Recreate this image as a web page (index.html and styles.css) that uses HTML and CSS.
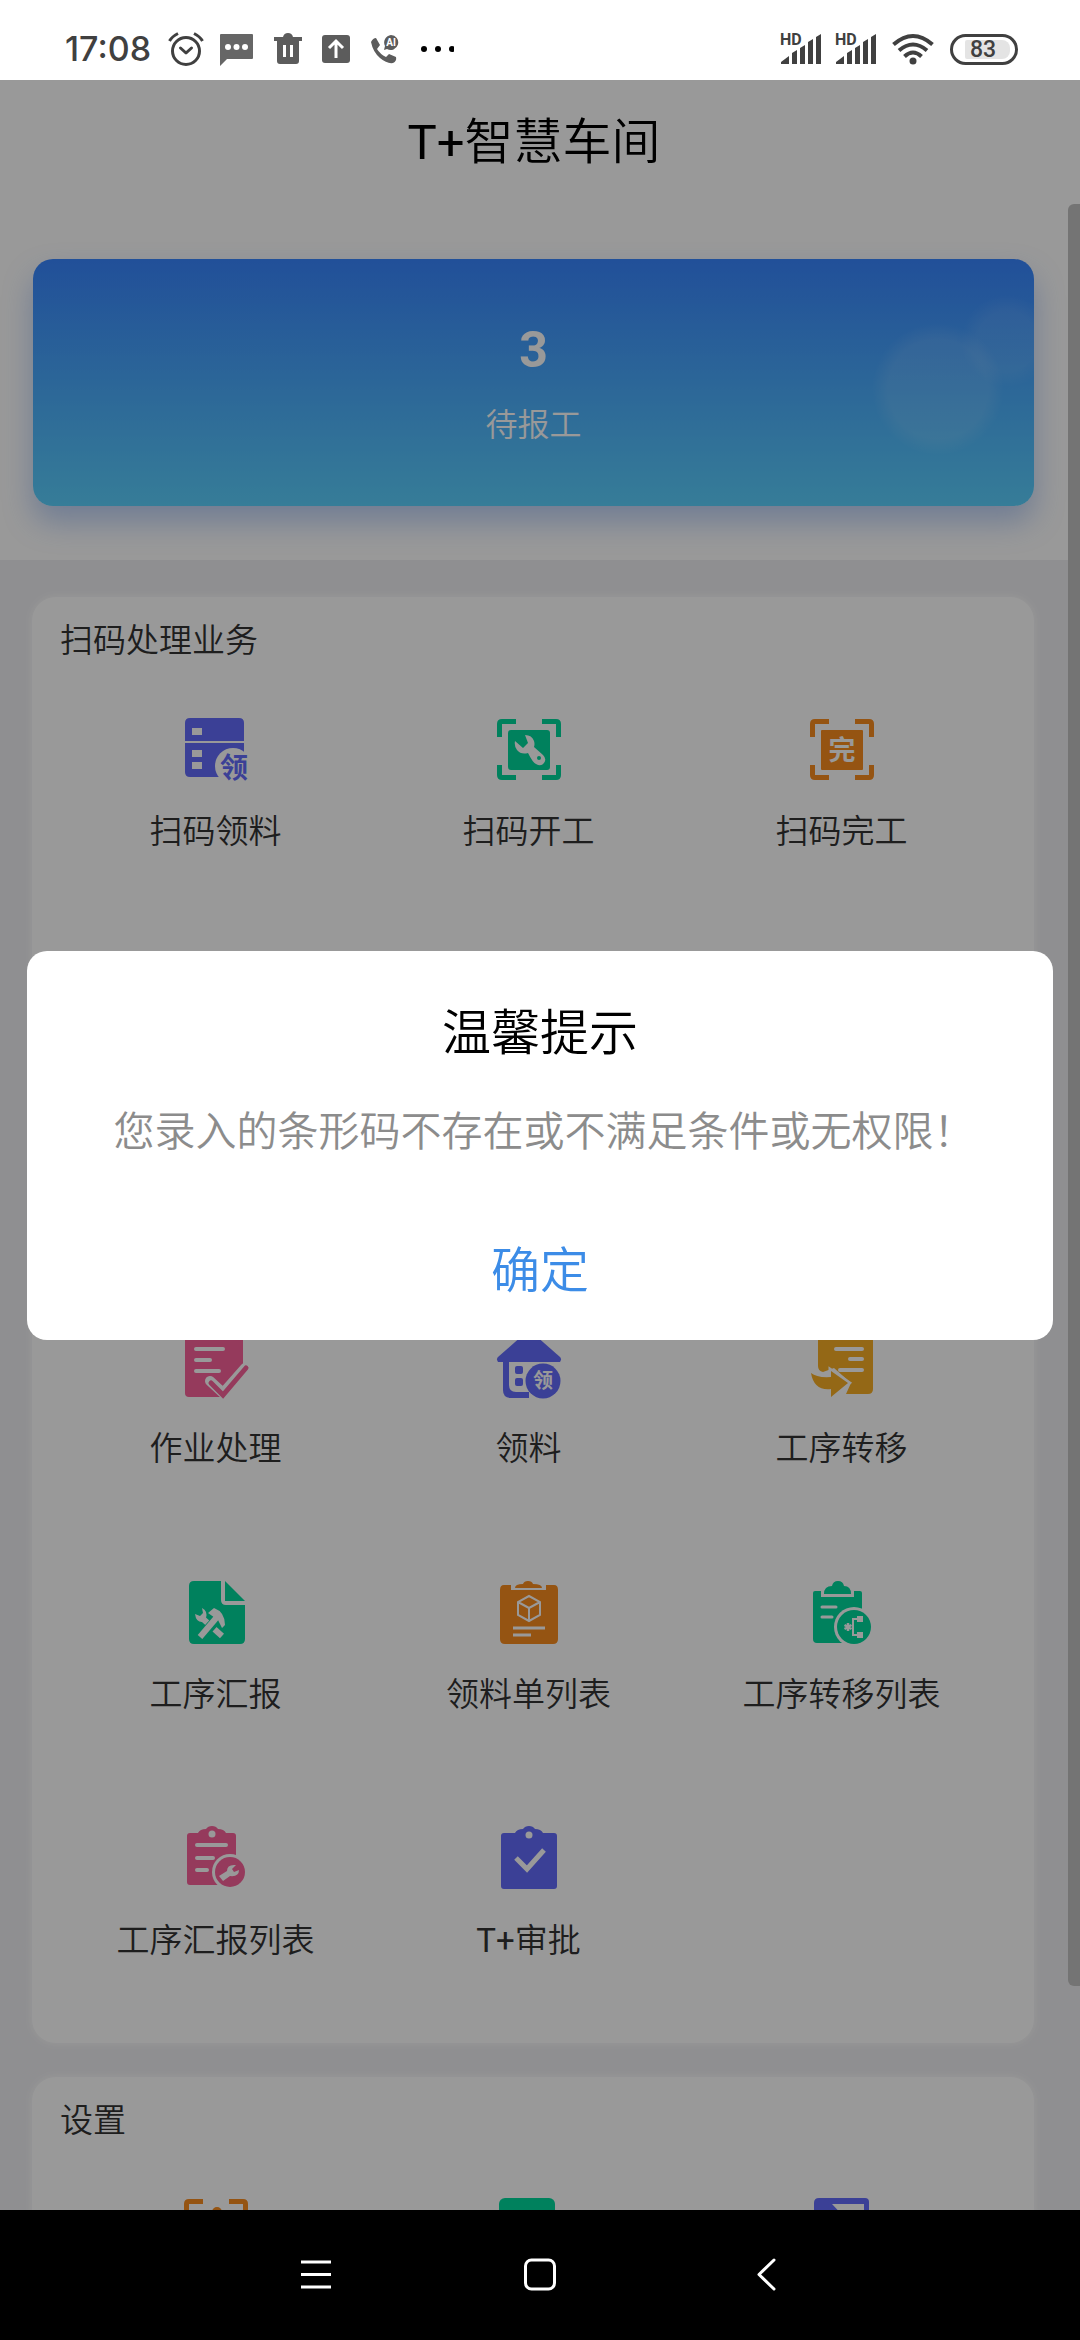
FILE: index.html
```html
<!DOCTYPE html>
<html lang="zh-CN">
<head>
<meta charset="utf-8">
<meta name="viewport" content="width=device-width">
<title>T+智慧车间</title>
<link rel="stylesheet" href="styles.css">
</head>
<body>
<div class="status">
  <div class="status-side">
    <span class="clock">17:08</span>
    <svg class="s-icon" width="36" height="36" viewBox="0 0 36 36" fill="none" stroke="#404040" stroke-width="3"><circle cx="18" cy="20" r="13.5"/><path d="M12.500 17l5.500 5 5.500-5" stroke-linecap="round" stroke-linejoin="round"/><path d="M1.500 10q2.500-4.500 8.500-7.500M34.500 10q-2.500-4.500-8.500-7.500"/></svg>
    <svg class="s-icon" width="34" height="34" viewBox="0 0 34 34"><path d="M0 3q0-1 1-1h31q1 0 1 1v23q0 1-1 1H7l-7 7z" fill="#666"/><g fill="#fff"><circle cx="8" cy="15" r="3"/><circle cx="16.500" cy="15" r="3"/><circle cx="25" cy="15" r="3"/></g></svg>
    <svg class="s-icon" width="28" height="32" viewBox="0 0 28 32"><path d="M0 4h9q1-4 5-4t5 4h9v4h-3v20q0 3-3 3H6q-3 0-3-3V8H0z" fill="#5c5c5c"/><path d="M10.500 12v12M17.500 12v12" stroke="#fff" stroke-width="3"/></svg>
    <svg class="s-icon" width="28" height="28" viewBox="0 0 28 28"><rect width="28" height="28" rx="3" fill="#5c5c5c"/><path d="M14 23V7M7 13l7-7 7 7" fill="none" stroke="#fff" stroke-width="3"/></svg>
    <svg class="s-icon" width="30" height="30" viewBox="0 0 30 30"><path d="M1 8q2-4 5-4l4 7-3 4q3 5 9 8l3-3 7 3q1 4-3 6-6 1-13-5T1 8" fill="#5c5c5c"/><path d="M21 1a7.500 7.500 0 1 1-4 14l-3 1 1-4A7.500 7.500 0 0 1 21 1" fill="#5c5c5c"/><text x="21" y="12" class="ai">AI</text></svg>
    <svg class="s-icon" width="34" height="8" viewBox="0 0 34 8"><circle cx="4" cy="4" r="3"/><circle cx="18" cy="4" r="3"/><circle cx="32" cy="4" r="3"/></svg>
  </div>
  <div class="status-side status-right">
    <svg class="signal" width="42" height="40" viewBox="0 -4 42 40" fill="#404040"><text x="0" y="12" class="hd">HD</text><path d="M1 31v-2l8-6v8zM12 31V20l5-3v14zM20 31V15l5-3v19zM28 31V9l5-3v25zM36 31V4l5-3v30z"/></svg>
    <svg class="signal" width="42" height="40" viewBox="0 -4 42 40" fill="#404040"><text x="0" y="12" class="hd">HD</text><path d="M1 31v-2l8-6v8zM12 31V20l5-3v14zM20 31V15l5-3v19zM28 31V9l5-3v25zM36 31V4l5-3v30z"/></svg>
    <svg class="wifi" width="42" height="32" viewBox="0 0 42 32" fill="none" stroke="#404040" stroke-width="4"><path d="M1.500 11.500q19.500-17 39 0M7 17.500q14-12 28 0M12.500 23.500q8.500-8 17 0"/><circle cx="21" cy="28" r="3.500" fill="#404040" stroke="none"/></svg>
    <span class="battery"><span class="level">83</span></span>
  </div>
</div>

<div class="app">
  <header class="bar"><h1><span class="latin">T+</span>智慧车间</h1></header>
  <main>
    <div class="hero-wrap">
      <a class="hero" href="#report">
        <strong>3</strong>
        <span>待报工</span>
      </a>
    </div>

    <section class="card scan">
      <h2>扫码处理业务</h2>
      <div class="grid">
        <a class="item" href="#a1">
          <svg class="icon purple" viewBox="0 0 64 64"><path d="M6 0h49q5 0 5 5v50q0 4-4 4H6q-5 0-5-5V5q0-5 5-5"/><circle cx="49" cy="48" r="18" fill="#fff"/><path d="M8 10h10v7H8zM8 32h10v7H8zM8 44h10v7H8zM1 23h59v2H1z" fill="#fff"/><text x="50" y="60" class="glyph g-big">领</text></svg>
          <span>扫码领料</span></a>
        <a class="item" href="#a2">
          <svg class="icon green" viewBox="0 0 64 64"><path d="M0 19V6q0-5 5-5h14v5H5v13zM64 19V6q0-5-5-5H45v5h14v13zM0 47v10q0 5 5 5h14v-5H5V47zM64 47v10q0 5-5 5H45v-5h14V47z"/><rect x="11" y="12" width="42" height="40" rx="3"/><path d="M28 17q7 0 9 6 1 3 0 6l9 8q4 4 1 8t-8 1q-3-1-8-11-7 2-11-3-3-4-2-9l8 7 5-5z" fill="#fff"/><circle cx="42" cy="40" r="2"/></svg>
          <span>扫码开工</span></a>
        <a class="item" href="#a3">
          <svg class="icon orange" viewBox="0 0 64 64"><path d="M0 19V6q0-5 5-5h14v5H5v13zM64 19V6q0-5-5-5H45v5h14v13zM0 47v10q0 5 5 5h14v-5H5V47zM64 47v10q0 5-5 5H45v-5h14V47z"/><rect x="11" y="12" width="42" height="40" rx="1"/><text x="32" y="42" class="glyph g-mid">完</text></svg>
          <span>扫码完工</span></a>
      </div>
    </section>

    <section class="card">
      <div class="section-head"></div>
      <div class="grid">
        <a class="item" href="#b1">
          <svg class="icon pink" viewBox="0 0 64 64"><path d="M5 0h50q4 0 4 4v36L38 62H5q-4 0-4-4V4q0-4 4-4"/><path d="M12 14h27M12 25h14M12 36h23" class="line"/><path d="M26 46l13 12 22-25" fill="none" stroke="#fff" stroke-width="10" stroke-linecap="round" stroke-linejoin="round"/><path d="M27 48l12 12 23-27" fill="none" stroke="currentColor" stroke-width="5" stroke-linecap="round"/></svg>
          <span>作业处理</span></a>
        <a class="item" href="#b2">
          <svg class="icon purple" viewBox="0 0 64 64"><path d="M1 22L26 0q6-4 12 0l25 22q2 2 0 5H1q-2-3 0-5"/><path d="M6 22h50v41H14q-8 0-8-8z"/><path d="M12 27h47v3L32 57H19q-7 0-7-7z" fill="#fff"/><rect x="18" y="31" width="8" height="8" rx="2"/><rect x="18" y="43" width="8" height="8" rx="2"/><path d="M32 57h30v7H32z" fill="#fff"/><circle cx="46" cy="46" r="17.500"/><text x="46" y="53" class="glyph g-small">领</text></svg>
          <span>领料</span></a>
        <a class="item" href="#b3">
          <svg class="icon amber" viewBox="0 0 64 64"><path d="M8 0h55v54q0 5-5 5H36l5-11-17-15-11 4q-5-1-5-6z"/><path d="M26 14h26M40 24h12M30 35h22" class="line"/><path d="M1 38q6 5 20 4v-6l17 12-17 14v-8q-17 2-20-16" stroke="#fff" stroke-width="5" paint-order="stroke"/></svg>
          <span>工序转移</span></a>
        <a class="item" href="#b4">
          <svg class="icon green" viewBox="0 0 64 64"><path d="M10 0h27v19q0 5 5 5h19v34q0 5-5 5H10q-5 0-5-5V5q0-5 5-5M41 0l20 20H41z"/><path d="M18 37l20 18" fill="none" stroke="#fff" stroke-width="6"/><path d="M18 27q6 3 4 10l-4 4q-6 0-7-8l5 2 3-3z" fill="#fff"/><path d="M16 57l19-21" fill="none" stroke="currentColor" stroke-width="10"/><path d="M16 56l17-20" fill="none" stroke="#fff" stroke-width="6"/><path d="M24 32l6-5q11 4 11 17l-3 3-4-8z" fill="#fff"/></svg>
          <span>工序汇报</span></a>
        <a class="item" href="#b5">
          <svg class="icon orange" viewBox="0 0 64 64"><path d="M7 4h50q4 0 4 5v49q0 5-5 5H8q-5 0-5-5V9q0-5 4-5"/><path d="M14 3h35v6H14z" fill="#fff"/><path d="M18 7q0-4 8-4 1-3 5-3t5 3q9 0 9 4z"/><path d="M32 15l11 6v13l-11 6-11-6V21zM21 21l11 6 11-6M32 27v13" fill="none" stroke="#fff" stroke-width="2"/><path d="M16 47h32M16 54h18" fill="none" stroke="#fff" stroke-width="3"/></svg>
          <span>领料单列表</span></a>
        <a class="item" href="#b6">
          <svg class="icon green" viewBox="0 0 64 64"><path d="M5 10h6v6h33v-6h6q2 0 2 2v50H7q-4 0-4-4V12q0-2 2-2M14 13q0-8 8-8 1-5 6-5t6 5q7 0 7 8z"/><path d="M12 26h14M12 36h10" class="line thin"/><circle cx="44" cy="46" r="20" fill="#fff"/><circle cx="44" cy="46" r="17"/><path d="M51 38h-8v16h8" fill="none" stroke="#fff" stroke-width="2"/><path d="M47 35h6v6h-6zM47 51h6v6h-6z" fill="#fff"/><path d="M38 42v8M34.500 44l7 4M34.500 48l7-4" stroke="#fff" stroke-width="2.500"/></svg>
          <span>工序转移列表</span></a>
        <a class="item" href="#b7">
          <svg class="icon pink" viewBox="0 0 64 64"><path d="M6 6h8q2-4 8-4 2-3 6-3t6 3q6 0 8 4h7q3 0 3 3v49H6q-3 0-3-3V9q0-3 3-3"/><circle cx="28" cy="7" r="3.500" fill="#fff"/><path d="M13 18h29M13 31h16M13 43h10" class="line"/><circle cx="46" cy="45" r="18" fill="#fff"/><circle cx="46" cy="45" r="15"/><path d="M35 49l8-5q0-7 9-6l-4 4 2 3 5-2q0 7-9 6l-7 5z" fill="#fff"/></svg>
          <span>工序汇报列表</span></a>
        <a class="item" href="#b8">
          <svg class="icon purple" viewBox="0 0 64 64"><path d="M7 6h11q2-4 8-4 2-3 6-3t6 3q6 0 8 4h11q3 0 3 3v50q0 3-3 3H7q-3 0-3-3V9q0-3 3-3"/><circle cx="32" cy="8" r="3.500" fill="#fff"/><path d="M19 31l11 11 17-19" fill="none" stroke="#fff" stroke-width="5"/></svg>
          <span><span class="latin">T+</span>审批</span></a>
      </div>
    </section>

    <section class="card">
      <h2>设置</h2>
      <div class="grid">
        <a class="item" href="#c1" aria-label="扫码设置">
          <svg class="icon orange" viewBox="0 0 64 64"><path d="M0 19V6q0-5 5-5h14v5H5v13zM64 19V6q0-5-5-5H45v5h14v13z"/><circle cx="33" cy="14" r="5"/></svg></a>
        <a class="item" href="#c2" aria-label="系统设置">
          <svg class="icon green" viewBox="0 0 64 64"><rect x="2" width="56" height="64" rx="6"/></svg></a>
        <a class="item" href="#c3" aria-label="退出">
          <svg class="icon purple" viewBox="0 0 64 64"><path d="M9 0h46q4 0 4 4v60H4V5q0-5 5-5"/><path d="M22 6h32v50H37V22z" fill="#fff"/></svg></a>
      </div>
    </section>
  </main>
  <div class="thumb"></div>

  <div class="overlay">
    <div class="dialog" role="alertdialog" aria-labelledby="tip" aria-describedby="msg">
      <h2 id="tip">温馨提示</h2>
      <p id="msg">您录入的条形码不存在或不满足条件或无权限！</p>
      <button type="button">确定</button>
    </div>
  </div>
</div>

<nav class="keys">
  <button type="button" aria-label="菜单"><svg width="32" height="34" viewBox="0 0 32 34"><path d="M1 4h30M1 16.500h30M1 29h30"/></svg></button>
  <button type="button" aria-label="主页"><svg width="32" height="34" viewBox="0 0 32 34"><rect x="1.500" y="2" width="29" height="29" rx="6"/></svg></button>
  <button type="button" aria-label="返回"><svg width="32" height="34" viewBox="0 0 32 34"><path d="M26 2L11 16.500 26 31" stroke-linejoin="round" stroke-linecap="round"/></svg></button>
</nav>
</body>
</html>
```

FILE: styles.css
```css
* { box-sizing: border-box; }

body {
  margin: 0;
  height: 100vh;
  display: flex;
  flex-direction: column;
  font-family: Roboto, "Noto Sans CJK SC", sans-serif;
  font-weight: 350;
  color: #333;
}

h1, h2, p { margin: 0; font-weight: 350; }
a { color: inherit; text-decoration: none; }
button { border: 0; background: none; font: inherit; padding: 0; }
.latin { font-weight: 400; }

/* system status bar */
.status {
  flex: none;
  height: 80px;
  padding: 18px 62px 0 65px;
  display: flex;
  justify-content: space-between;
  align-items: center;
  background: #fff;
}
.status-side { display: flex; align-items: center; gap: 20px; }
.status-right { gap: 13px; }
.clock {
  font: 500 34px/40px Inter, sans-serif;
  color: #404040;
  margin-right: -3px;
}
.s-icon { flex: none; }
.s-icon:nth-child(3) { margin-left: -4px; }
.ai { font: 700 10px Roboto, sans-serif; fill: #fff; text-anchor: middle; }
.hd { font: 700 16px Roboto, sans-serif; }
.wifi { margin-left: 2px; }
.battery {
  width: 68px;
  height: 31px;
  margin-left: 3px;
  padding: 3px 5px 3px 12px;
  border: 3px solid #404040;
  border-radius: 16px;
}
.level {
  display: block;
  padding-left: 5px;
  border-radius: 2px 8px 8px 2px;
  background: #e4e4e4;
  color: #404040;
  font: 500 23px/19px Roboto, sans-serif;
}

/* app */
.app {
  position: relative;
  flex: 1;
  min-height: 0;
  overflow: hidden;
  background: #efeff2;
}
.bar {
  padding-right: 12px;
  background: #fff;
  text-align: center;
}
.bar h1 { font-size: 49px; line-height: 126px; color: #000; }
.hero-wrap { padding: 53px 46px 54px 33px; background: #fff; }
.hero {
  display: flex;
  flex-direction: column;
  align-items: center;
  gap: 20px;
  padding: 61px 0 56px;
  border-radius: 20px;
  color: #fff;
  background:
    radial-gradient(circle at calc(100% - 96px) 130px, rgba(255,255,255,.1) 50px, transparent 66px),
    radial-gradient(circle at calc(100% - 27px) 82px, rgba(255,255,255,.08) 30px, transparent 46px),
    linear-gradient(#3885ff, #5bd0fd);
  box-shadow: 0 16px 30px rgba(60,120,230,.35);
}
.hero strong { font-size: 50px; line-height: 60px; font-weight: 700; }
.hero span { font-size: 32px; line-height: 50px; }

.card {
  margin: 0 46px 34px 32px;
  border-radius: 24px;
  background: #fff;
  box-shadow: 0 0 8px #fff;
}
.scan { margin-top: 37px; }
.card h2, .section-head {
  height: 91px;
  padding-left: 28px;
  font-size: 33px;
  line-height: 88px;
}
.grid {
  display: grid;
  grid-template-columns: repeat(3, 1fr);
  grid-auto-rows: 246px;
  padding: 0 36px 0 27px;
}
.scan .grid { grid-template-rows: repeat(2, 246px); }
.item {
  display: flex;
  flex-direction: column;
  align-items: center;
  gap: 27px;
  padding-top: 30px;
  font-size: 33px;
  line-height: 46px;
}
.icon { width: 64px; height: 64px; overflow: visible; fill: currentColor; }
.line { fill: none; stroke: #fff; stroke-width: 4; stroke-linecap: round; }
.thin { stroke-width: 3; }
.glyph { font-family: "Noto Sans CJK SC", sans-serif; font-weight: 700; text-anchor: middle; fill: #fff; }
.g-big { font-size: 28px; fill: currentColor; }
.g-mid { font-size: 27px; }
.g-small { font-size: 20px; }
.purple { color: #636bfa; }
.green { color: #00d79c; }
.orange { color: #f98c1e; }
.pink { color: #f8619a; }
.amber { color: #f7ae26; }

.thumb {
  position: absolute;
  top: 124px;
  right: 0;
  bottom: 224px;
  width: 12px;
  border-radius: 6px 0 0 6px;
  background: #c2c2c2;
}

/* alert */
.overlay {
  position: absolute;
  inset: 0;
  display: flex;
  align-items: center;
  justify-content: center;
  background: rgba(0,0,0,.4);
}
.dialog {
  width: 95%;
  padding: 48px 0 28px;
  border-radius: 20px;
  background: #fff;
  display: flex;
  flex-direction: column;
  align-items: center;
}
.dialog h2 { font-size: 49px; line-height: 70px; color: #000; }
.dialog p {
  margin: 33px 0 70px;
  padding-left: 8px;
  font-size: 41px;
  line-height: 60px;
  color: #8c8c8c;
}
.dialog button { width: 100%; font-size: 49px; line-height: 80px; color: #3c8ce7; }

/* system navigation keys */
.keys {
  flex: none;
  height: 130px;
  padding: 0 204px;
  display: grid;
  grid-template-columns: repeat(3, 1fr);
  background: #000;
}
.keys button { display: flex; align-items: center; justify-content: center; }
.keys svg { fill: none; stroke: #fff; stroke-width: 3; }
```
